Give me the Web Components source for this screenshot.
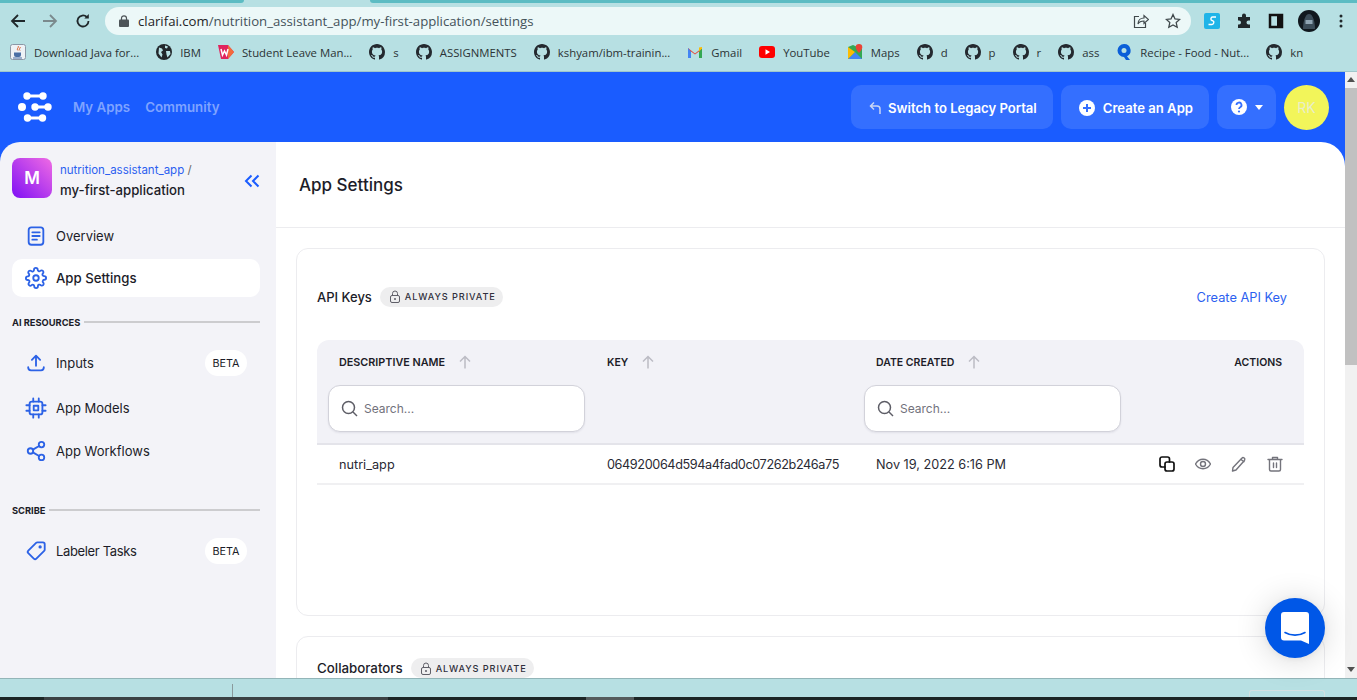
<!DOCTYPE html>
<html lang="en">
<head>
<meta charset="utf-8">
<title>App Settings</title>
<style>
  html, body { margin: 0; height: 100%; overflow: hidden; background: #b7e0e3; }
  body { display: flex; flex-direction: column; height: 700px; font-family: Inter, "Liberation Sans", sans-serif; }
</style>
</head>
<body>
<browser-chrome></browser-chrome>
<app-shell>
  <app-header slot="header"></app-header>
  <app-sidebar slot="sidebar"></app-sidebar>
  <settings-page slot="main"></settings-page>
</app-shell>
<task-strip></task-strip>
<chat-launcher></chat-launcher>

<script>
const GITHUB = '<path fill="#24292f" d="M8 0C3.58 0 0 3.58 0 8c0 3.54 2.29 6.53 5.47 7.59.4.07.55-.17.55-.38 0-.19-.01-.82-.01-1.49-2.01.37-2.53-.49-2.69-.94-.09-.23-.48-.94-.82-1.13-.28-.15-.68-.52-.01-.53.63-.01 1.08.58 1.23.82.72 1.21 1.87.87 2.33.66.07-.52.28-.87.51-1.07-1.78-.2-3.64-.89-3.64-3.95 0-.87.31-1.59.82-2.15-.08-.2-.36-1.02.08-2.12 0 0 .67-.21 2.2.82.64-.18 1.32-.27 2-.27.68 0 1.36.09 2 .27 1.53-1.04 2.2-.82 2.2-.82.44 1.1.16 1.92.08 2.12.51.56.82 1.27.82 2.15 0 3.07-1.87 3.75-3.65 3.95.29.25.54.73.54 1.48 0 1.07-.01 1.93-.01 2.2 0 .21.15.46.55.38A8.013 8.013 0 0016 8c0-4.42-3.58-8-8-8z"/>';

const BOOKMARK_ICONS = {
    java: '<rect x=".5" y=".5" width="15" height="15" rx="2" fill="#eef2f6" stroke="#8a97a6"/><path d="M8 2c1.5 1.5-2 2.500 0 4.500M10 3c1 1-2 2 0 3.500" fill="none" stroke="#d9541e"/><path d="M4 8.500h7v2.500a2 2 0 0 1-2 2H6a2 2 0 0 1-2-2z" fill="#4a6fa5"/><path d="M3 14h9" stroke="#4a6fa5"/>',
    globe: '<circle cx="8" cy="8" r="8" fill="#22272b"/><path d="M3 3.500l3 1 1 2-2 1.500 1.500 2.500-1 3-3-4zM9 1.500l3 1-1 2-2-.5zM10 7l4 0 .5 3-3 3.500-1-3z" fill="#b7e0e3"/>',
    wm: '<path d="M0 1l10 0 6 7-6 7H3z" fill="#e0245e"/><path d="M10 1l6 7-6 7z" fill="#f36b3b"/><path d="M3 5l1.500 6 2-4 2 4L10 5" fill="none" stroke="#fff" stroke-width="1.500"/>',
    github: GITHUB,
    gmail: '<path d="M1 14V4l7 5.500L15 4v10h-3V7.500L8 10.500 4 7.500V14z" fill="#ea4335"/><path d="M1 4v10h3V7.500z" fill="#4285f4"/><path d="M15 4v10h-3V7.500z" fill="#34a853"/><path d="M12 3.500L15 3v1.500l-3 3z" fill="#fbbc04"/>',
    youtube: '<rect y="2" width="16" height="12" rx="3" fill="#f00"/><path d="M6.500 5.200v5.600L11 8z" fill="#fff"/>',
    maps: '<path d="M1 3l5-2 9 4v10l-14 0z" fill="#34a853"/><path d="M1 15l7-7 7 7z" fill="#4285f4"/><path d="M1 3l7 5-7 7z" fill="#fbbc04"/><path d="M12 0a3.300 3.300 0 0 1 3.300 3.300C15.300 5.500 12 9 12 9S8.700 5.500 8.700 3.300A3.300 3.300 0 0 1 12 0z" fill="#ea4335"/>',
    recipe: '<path d="M8 0a6.500 6.500 0 0 1 3 12.300L14 16h-4l-2-3A6.500 6.500 0 0 1 8 0z" fill="#0b5fd8"/><circle cx="8" cy="6.500" r="2.500" fill="#b7e0e3"/>'
};

const NAV_ICONS = {
    overview: '<rect x="4" y="2.500" width="16" height="19" rx="3"/><path d="M8 8h8M8 12h8M8 16h5"/>',
    settings: '<circle cx="12" cy="12" r="3"/><path d="M19.400 15a1.650 1.650 0 0 0 .33 1.820l.06.06a2 2 0 1 1-2.830 2.830l-.06-.06a1.650 1.650 0 0 0-2.800 1.170V21a2 2 0 1 1-4 0v-.09a1.650 1.650 0 0 0-2.820-1.110l-.06.06a2 2 0 1 1-2.830-2.830l.06-.06a1.650 1.650 0 0 0-1.170-2.800H3a2 2 0 1 1 0-4h.09A1.650 1.650 0 0 0 4.200 7.350l-.06-.06a2 2 0 1 1 2.830-2.830l.06.06a1.650 1.650 0 0 0 2.800-1.170V3a2 2 0 1 1 4 0v.09a1.650 1.650 0 0 0 2.800 1.170l.06-.06a2 2 0 1 1 2.830 2.830l-.06.06a1.650 1.650 0 0 0 1.170 2.800H21a2 2 0 1 1 0 4h-.09a1.650 1.650 0 0 0-1.510 1.110z"/>',
    inputs: '<path d="M12 15V4M7.500 8.500L12 4l4.500 4.500M3.500 16.500v.5a3 3 0 0 0 3 3h11a3 3 0 0 0 3-3v-.5"/>',
    models: '<rect x="5" y="5" width="14" height="14" rx="2.500"/><rect x="9.500" y="9.500" width="5" height="5"/><path d="M9 1.500V5M15 1.500V5M9 19v3.500M15 19v3.500M1.500 9H5M1.500 15H5M19 9h3.500M19 15h3.500"/>',
    workflows: '<circle cx="18" cy="5" r="3"/><circle cx="6" cy="12" r="3"/><circle cx="18" cy="19" r="3"/><path d="M8.600 13.500l6.800 4M15.400 6.500l-6.800 4"/>',
    tag: '<path d="M13.500 2.500h6a2 2 0 0 1 2 2v6a2 2 0 0 1-.6 1.400l-8.500 8.500a2 2 0 0 1-2.800 0l-6-6a2 2 0 0 1 0-2.800l8.500-8.500a2 2 0 0 1 1.400-.6z"/><circle cx="16.500" cy="7.500" r=".8"/>'
};

class BrowserChrome extends HTMLElement {
    constructor() {
        super();
        this.attachShadow({ mode: 'open' });
    }

    connectedCallback() {
        const marks = [
            ['java', 'Download Java for...'], ['globe', 'IBM'], ['wm', 'Student Leave Man...'],
            ['github', 's'], ['github', 'ASSIGNMENTS'], ['github', 'kshyam/ibm-trainin...'],
            ['gmail', 'Gmail'], ['youtube', 'YouTube'], ['maps', 'Maps'],
            ['github', 'd'], ['github', 'p'], ['github', 'r'], ['github', 'ass'],
            ['recipe', 'Recipe - Food - Nut...'], ['github', 'kn']
        ];
        const items = marks.map(([icon, label]) => `
            <span class="mark"><svg width="16" height="16" viewBox="0 0 16 16">${BOOKMARK_ICONS[icon]}</svg>${label}</span>`).join('');

        this.shadowRoot.innerHTML = `
            <style>
                :host { display: block; height: 72px; background: #b7e0e3; color: #2b3335; font-family: "Open Sans", "Noto Sans", sans-serif; flex: none; box-sizing: border-box; border-bottom: 1px solid #9fc7cb; }
                .tabs { display: flex; justify-content: space-between; height: 3px; }
                .tabs i { background: #5cbcc3; }
                .tabs i:first-child { width: 244px; border-bottom-right-radius: 4px; }
                .tabs i:last-child { width: 987px; border-bottom-left-radius: 4px; }
                .tools { display: flex; align-items: center; height: 36px; padding-left: 10px; }
                .nav { display: flex; gap: 16px; align-items: center; margin-right: 14px; }
                .url { flex: none; width: 1086px; height: 28px; border-radius: 14px; background: #ecf8f8; display: flex; align-items: center; padding: 0 10px 0 14px; box-sizing: border-box; font-size: 13.200px; color: #44525a; }
                .url b { font-weight: 400; color: #1e2427; }
                .url svg:first-child { margin-right: 9px; }
                .url .grow { flex: 1; }
                .url .star { margin-left: 16px; }
                .ext { display: flex; align-items: center; gap: 16px; margin-left: 13px; }
                .ext .me { margin-left: -2px; }
                .ext .dots { margin-left: 3px; }
                .marks { display: flex; align-items: center; gap: 17px; height: 32px; padding-left: 10px; font-size: 11.350px; white-space: nowrap; margin-top: -3px; }
                .mark { display: flex; align-items: center; gap: 8px; }
            </style>
            <div class="tabs"><i></i><i></i></div>
            <div class="tools">
                <div class="nav">
                    <svg width="16" height="16" viewBox="0 0 16 16" fill="none" stroke="#20282b" stroke-width="1.800"><path d="M15 8H2M8 2L2 8l6 6"/></svg>
                    <svg width="16" height="16" viewBox="0 0 16 16" fill="none" stroke="#7b8a8d" stroke-width="1.800"><path d="M1 8h13M8 2l6 6-6 6"/></svg>
                    <svg width="16" height="16" viewBox="0 0 16 16" fill="none" stroke="#20282b" stroke-width="1.800" style="margin-left:1px"><path d="M13.500 8A5.500 5.500 0 1 1 11.800 4"/><path d="M13.800 1v4.500H9.300" stroke="none" fill="#20282b"/></svg>
                </div>
                <div class="url">
                    <svg width="10" height="12" viewBox="0 0 10 12"><path d="M2.500 5V3.300a2.500 2.500 0 0 1 5 0V5" fill="none" stroke="#4d5458" stroke-width="1.200"/><rect y="4.600" width="10" height="7.400" rx="1" fill="#4d5458"/></svg>
                    <span><b>clarifai.com</b>/nutrition_assistant_app/my-first-application/settings</span>
                    <span class="grow"></span>
                    <svg width="16" height="16" viewBox="0 0 16 16" fill="none" stroke="#40494c" stroke-width="1.200"><path d="M6 3.500H1.500v11h11V10"/><path d="M5 11c0-4 3-6 6-6V2.500L15.500 6.500 11 10.500V8c-3 0-5 1-6 3z"/></svg>
                    <svg class="star" width="16" height="16" viewBox="0 0 16 16" fill="none" stroke="#40494c" stroke-width="1.300"><path d="M8 1.500l2 4.400 4.700.5-3.500 3.200 1 4.700L8 11.900l-4.200 2.400 1-4.700L1.300 6.400 6 5.900z"/></svg>
                </div>
                <div class="ext">
                    <svg width="16" height="16" viewBox="0 0 16 16"><rect width="16" height="16" rx="2" fill="#1fb4e8"/><path d="M12 4H8.500C6.800 4 6.200 7 8 7.500l1 .4c1.500.6.800 3.600-1 3.600H4.500" fill="none" stroke="#fff" stroke-width="1.400"/></svg>
                    <svg width="16" height="16" viewBox="0 0 16 16"><path d="M6 2.500a2 2 0 0 1 4 0V4h4v3.500h-1.500a2 2 0 0 0 0 4H14V15H2v-3.500h1a2 2 0 0 0 0-4H2V4h4z" fill="#20282b"/></svg>
                    <svg width="16" height="16" viewBox="0 0 16 16"><path d="M2 2h12v12H2z" fill="none" stroke="#111" stroke-width="2.500"/><rect x="9" y="2" width="5" height="12" fill="#111"/></svg>
                    <svg class="me" width="22" height="22" viewBox="0 0 22 22"><circle cx="11" cy="11" r="11" fill="#10181e"/><path d="M5 19c0-7 2-15 6-15s6 8 6 15z" fill="#3b4c58"/><rect x="7.500" y="10" width="7" height="4" fill="#8fa5b3"/></svg>
                    <svg class="dots" width="4" height="14" viewBox="0 0 4 14"><circle cx="2" cy="2" r="1.500" fill="#20282b"/><circle cx="2" cy="7" r="1.500" fill="#20282b"/><circle cx="2" cy="12" r="1.500" fill="#20282b"/></svg>
                </div>
            </div>
            <div class="marks">${items}</div>
        `;
    }
}

class AppShell extends HTMLElement {
    constructor() {
        super();
        this.attachShadow({ mode: 'open' });
        this.shadowRoot.innerHTML = `
            <style>
                :host { display: grid; grid-template-columns: 1fr 12px; flex: 1; min-height: 0; overflow: hidden; background: #f1f1f1; }
                .page { display: grid; grid-template-rows: 70px 1fr; grid-template-columns: 276px 1fr; background: #1a5cff; min-height: 0; overflow: hidden; }
                .head { grid-column: 1 / 3; }
                .bar { display: flex; flex-direction: column; align-items: center; background: #f1f1f1; }
                .bar span { display: block; width: 0; height: 0; border: 4px solid transparent; }
                .up { border-bottom: 5px solid #505050 !important; border-top-width: 0 !important; margin-top: 5px; }
                .down { border-top: 5px solid #505050 !important; border-bottom-width: 0 !important; margin-bottom: 6px; }
                .thumb { width: 100%; height: 277px; margin: 6px 0 auto; background: #c1c1c1; }
            </style>
            <div class="page">
                <div class="head"><slot name="header"></slot></div>
                <slot name="sidebar"></slot>
                <slot name="main"></slot>
            </div>
            <div class="bar"><span class="up"></span><div class="thumb"></div><span class="down"></span></div>
        `;
    }
}

class AppHeader extends HTMLElement {
    constructor() {
        super();
        this.attachShadow({ mode: 'open' });
        this.shadowRoot.innerHTML = `
            <style>
                :host { display: flex; align-items: center; height: 70px; padding: 0 16px 0 18px; box-sizing: border-box; color: #fff; }
                .logo { margin-right: 21px; }
                a { color: #7ea3ff; font-size: 13.300px; font-weight: 600; margin-right: 15px; }
                .grow { flex: 1; }
                .btn { display: flex; align-items: center; gap: 7px; height: 44px; padding: 0 16px; margin-left: 8px; border-radius: 10px; background: #346fff; font-size: 13.100px; font-weight: 600; box-sizing: border-box; white-space: nowrap; padding-top: 1px; }
                .switch { padding-left: 18px; padding-right: 16px; }
                .create { gap: 8px; padding-left: 18px; }
                .help { width: 59px; padding: 0 0 0 14px; gap: 8px; }
                .caret { width: 0; height: 0; border: 4px solid transparent; border-top: 5px solid #fff; border-bottom: 0; }
                .user { display: flex; align-items: center; justify-content: center; width: 45px; height: 45px; margin-left: 8px; border-radius: 50%; background: #f2f55a; font-size: 14px; color: #e9eec8; }
            </style>
            <svg class="logo" width="34" height="30" viewBox="0 0 34 30" fill="#fff" stroke="#fff">
                <path d="M9 4h16" stroke-width="3"/><circle cx="9" cy="4" r="3.700" stroke="none"/><circle cx="25" cy="4" r="3.700" stroke="none"/>
                <circle cx="4" cy="15" r="4" stroke="none"/>
                <path d="M17 15h13" stroke-width="3"/><circle cx="17" cy="15" r="3.700" stroke="none"/><circle cx="30" cy="15" r="3.700" stroke="none"/>
                <path d="M9.500 26h15" stroke-width="3"/><circle cx="9.500" cy="26" r="3.700" stroke="none"/><circle cx="24.500" cy="26" r="3.700" stroke="none"/>
            </svg>
            <a>My Apps</a>
            <a>Community</a>
            <span class="grow"></span>
            <div class="btn switch">
                <svg width="12" height="14" viewBox="0 0 12 14" fill="none" stroke="#c9d6f5" stroke-width="1.500"><path d="M5 1.500L1.500 5 5 8.500M1.500 5H8a3 3 0 0 1 3 3v5"/></svg>
                Switch to Legacy Portal
            </div>
            <div class="btn create">
                <svg width="16" height="16" viewBox="0 0 16 16"><circle cx="8" cy="8" r="8" fill="#fff"/><path d="M8 4v8M4 8h8" stroke="#346fff" stroke-width="2"/></svg>
                Create an App
            </div>
            <div class="btn help">
                <svg width="16" height="16" viewBox="0 0 16 16"><circle cx="8" cy="8" r="8" fill="#fff"/><path d="M5.500 6a2.500 2.500 0 1 1 3.700 2.200c-.8.5-1.200.9-1.200 1.800" fill="none" stroke="#346fff" stroke-width="1.800"/><circle cx="8" cy="12.500" r="1.100" fill="#346fff"/></svg>
                <span class="caret"></span>
            </div>
            <div class="user">RK</div>
        `;
    }
}

class NavItem extends HTMLElement {
    constructor() {
        super();
        this.attachShadow({ mode: 'open' });
    }

    connectedCallback() {
        const icon = NAV_ICONS[this.getAttribute('icon')] || '';
        const beta = this.hasAttribute('beta') ? '<span class="beta">BETA</span>' : '';
        this.shadowRoot.innerHTML = `
            <style>
                :host { display: flex; align-items: center; height: 38px; padding: 0 13px; border-radius: 10px; font-size: 13px; color: #1c1c28; }
                :host([active]) { background: #fff; font-weight: 500; font-size: 13.200px; }
                svg { width: 22px; height: 22px; margin-right: 9px; flex: none; fill: none; stroke: #2c62e6; stroke-width: 2; stroke-linecap: round; stroke-linejoin: round; }
                .label { flex: 1; }
                .beta { display: flex; align-items: center; height: 26px; padding: 0 7.500px; border-radius: 13px; background: #fff; font-size: 10.800px; letter-spacing: 0; }
            </style>
            <svg viewBox="0 0 24 24">${icon}</svg>
            <span class="label"><slot></slot></span>
            ${beta}
        `;
    }
}

class NavSection extends HTMLElement {
    constructor() {
        super();
        this.attachShadow({ mode: 'open' });
        this.shadowRoot.innerHTML = `
            <style>
                :host { display: flex; align-items: center; gap: 4px; height: 14px; font-size: 9.300px; font-weight: 700; color: #1c1c28; white-space: nowrap; }
                i { flex: 1; height: 2px; background: #cccccf; }
            </style>
            <slot></slot><i></i>
        `;
    }
}

class AppSidebar extends HTMLElement {
    constructor() {
        super();
        this.attachShadow({ mode: 'open' });
        this.shadowRoot.innerHTML = `
            <style>
                :host { display: flex; flex-direction: column; padding: 16px 16px 0 12px; background: #f3f3f8; border-top-left-radius: 20px; min-height: 0; }
                .crumb { display: flex; align-items: center; height: 40px; margin-bottom: 19px; }
                .avatar { display: flex; align-items: center; justify-content: center; width: 40px; height: 40px; border-radius: 8px; flex: none; margin-right: 8px; background: linear-gradient(45deg, #7f10f5, #f06be4); color: #fff; font-size: 17px; font-weight: 600; }
                .path { flex: 1; font-size: 11.500px; line-height: 20px; color: #666; white-space: nowrap; padding-top: 4px; }
                .path a { color: #2c5ff0; }
                .path div { font-size: 13.200px; font-weight: 500; color: #1c1c28; }
                .chev { align-self: flex-end; margin-bottom: 10px; }
                nav-item + nav-item { margin-top: 4px; }
                .ai { margin: 18px 0 15px; }
                .models { margin-top: 7px !important; }
                .wf { margin-top: 5px !important; }
                .scribe { margin: 33px 0 15px; }
                .tasks { letter-spacing: -.35px; }
            </style>
            <div class="crumb">
                <div class="avatar">M</div>
                <div class="path"><a>nutrition_assistant_app</a> /<div>my-first-application</div></div>
                <svg class="chev" width="16" height="14" viewBox="0 0 16 14" fill="none" stroke="#1a5cff" stroke-width="2"><path d="M7.500 1.500L2 7l5.500 5.500M14.500 1.500L9 7l5.500 5.500"/></svg>
            </div>
            <nav-item icon="overview">Overview</nav-item>
            <nav-item icon="settings" active>App Settings</nav-item>
            <nav-section class="ai">AI RESOURCES</nav-section>
            <nav-item icon="inputs" beta>Inputs</nav-item>
            <nav-item icon="models" class="models">App Models</nav-item>
            <nav-item icon="workflows" class="wf">App Workflows</nav-item>
            <nav-section class="scribe">SCRIBE</nav-section>
            <nav-item icon="tag" class="tasks" beta>Labeler Tasks</nav-item>
        `;
    }
}

class PrivateBadge extends HTMLElement {
    constructor() {
        super();
        this.attachShadow({ mode: 'open' });
        this.shadowRoot.innerHTML = `
            <style>
                :host { display: inline-flex; align-items: center; gap: 4px; height: 20px; padding: 0 7px 0 9px; border-radius: 10px; background: #eeeeef; font-size: 9.200px; font-weight: 500; letter-spacing: .9px; color: #30303c; white-space: nowrap; }
            </style>
            <svg width="12" height="13" viewBox="0 0 12 13" fill="none" stroke="#5f5f68" stroke-width="1"><path d="M3.500 5.500V3.500a2.500 2.500 0 0 1 5 0v2"/><rect x="1.500" y="5.500" width="9" height="7" rx="1.500"/><circle cx="6" cy="9" r=".6" fill="#5f5f68"/></svg>
            <slot></slot>
        `;
    }
}

class SearchBox extends HTMLElement {
    constructor() {
        super();
        this.attachShadow({ mode: 'open' });
        this.shadowRoot.innerHTML = `
            <style>
                :host { display: flex; align-items: center; gap: 6px; width: 257px; height: 47px; padding-left: 12px; box-sizing: border-box; background: #fff; border: 1px solid #d2d2da; border-radius: 12px; box-shadow: 0 1px 2px rgba(30,30,60,.08); font-size: 12px; color: #72727c; }
            </style>
            <svg width="17" height="17" viewBox="0 0 17 17" fill="none" stroke="#5d5d66" stroke-width="1.500"><circle cx="7.500" cy="7.500" r="6"/><path d="M12 12l4 4"/></svg>
            Search...
        `;
    }
}

class SortHead extends HTMLElement {
    constructor() {
        super();
        this.attachShadow({ mode: 'open' });
        this.shadowRoot.innerHTML = `
            <style>
                :host { display: flex; align-items: center; height: 20px; font-size: 10.500px; font-weight: 600; color: #1c1c28; white-space: nowrap; gap: 14px; }
            </style>
            <slot></slot>
            <svg width="12" height="14" viewBox="0 0 12 14" fill="none" stroke="#bcbcc4" stroke-width="1.500"><path d="M6 13.500V1.500M1 6.500l5-5 5 5"/></svg>
        `;
    }
}

class KeysTable extends HTMLElement {
    constructor() {
        super();
        this.attachShadow({ mode: 'open' });
        this.shadowRoot.innerHTML = `
            <style>
                :host { display: block; font-size: 12.700px; color: #2a2a34; }
                .head, .row { display: grid; grid-template-columns: 268px 269px 1fr auto; padding: 0 22px; }
                .head { grid-template-rows: 20px 47px; row-gap: 13px; height: 105px; padding-top: 12px; box-sizing: border-box; background: #f2f2f7; border-radius: 12px 12px 0 0; border-bottom: 2px solid #e4e4ea; }
                .head sort-head:first-child { font-size: 10.800px; }
                .head search-box { margin-left: -11px; }
                .head search-box:last-of-type { margin-left: -12px; }
                .actions { justify-self: end; align-self: center; font-size: 10.500px; font-weight: 600; color: #1c1c28; }
                .row { align-items: center; height: 40px; border-bottom: 2px solid #f0f0f2; box-sizing: border-box; }
                .key { letter-spacing: -.4px; }
                .tools { display: flex; gap: 20px; margin-right: -1px; }
                .tools svg { width: 16px; height: 16px; fill: none; stroke: #74747c; stroke-width: 1.400; stroke-linejoin: round; stroke-linecap: round; }
                .tools svg.copy { stroke: #111; stroke-width: 1.700; }
            </style>
            <div class="head">
                <sort-head>DESCRIPTIVE NAME</sort-head>
                <sort-head>KEY</sort-head>
                <sort-head>DATE CREATED</sort-head>
                <span class="actions">ACTIONS</span>
                <search-box></search-box>
                <span></span>
                <search-box></search-box>
                <span></span>
            </div>
            <div class="row">
                <span>nutri_app</span>
                <span class="key">064920064d594a4fad0c07262b246a75</span>
                <span>Nov 19, 2022 6:16 PM</span>
                <div class="tools">
                    <svg class="copy" viewBox="0 0 16 16"><rect x="6" y="6" width="9" height="9" rx="2"/><path d="M6 11H3a2 2 0 0 1-2-2V3a2 2 0 0 1 2-2h5.500a2 2 0 0 1 2 2v3"/></svg>
                    <svg viewBox="0 0 16 16"><path d="M.5 8C2.300 4.900 5 3.300 8 3.300S13.700 4.900 15.500 8C13.700 11.100 11 12.700 8 12.700S2.300 11.100.5 8z"/><circle cx="8" cy="8" r="2.500"/></svg>
                    <svg viewBox="0 0 16 16"><path d="M10.800 2.200a1.700 1.700 0 0 1 2.900 1.700l-.5.8L5 14l-3.500 1 .5-3.600z"/><path d="M10 3.500l3 2.200"/></svg>
                    <svg viewBox="0 0 16 16"><path d="M1 3.500h14M5.500 3.500V1.500h5v2M2.500 3.500v10a1.500 1.500 0 0 0 1.500 1.500h8a1.500 1.500 0 0 0 1.500-1.500v-10M6.500 7v4.500M9.500 7v4.500"/></svg>
                </div>
            </div>
        `;
    }
}

class SettingsCard extends HTMLElement {
    constructor() {
        super();
        this.attachShadow({ mode: 'open' });
        this.shadowRoot.innerHTML = `
            <style>
                :host { display: block; flex: none; padding: 0 20px; border: 1px solid #ececef; border-radius: 12px; box-sizing: border-box; }
                .top { display: flex; align-items: center; gap: 8px; height: var(--top-height, 91px); padding-top: var(--top-pad, 0); box-sizing: border-box; font-size: var(--title-size, 13px); font-weight: 500; color: #1c1c28; }
                .grow { flex: 1; }
                ::slotted(a) { color: #2c5ff0; font-size: 12.800px; font-weight: 400; margin: 2px 17px 0 0; }
            </style>
            <div class="top">
                <slot name="title"></slot><slot name="badge"></slot>
                <span class="grow"></span>
                <slot name="link"></slot>
            </div>
            <slot></slot>
        `;
    }
}

class SettingsPage extends HTMLElement {
    constructor() {
        super();
        this.attachShadow({ mode: 'open' });
        this.shadowRoot.innerHTML = `
            <style>
                :host { display: block; background: #fff; border-top-right-radius: 24px; min-height: 0; overflow: hidden; }
                h1 { margin: 0; height: 85px; line-height: 86px; padding-left: 23px; border-bottom: 1px solid #ececef; font-size: 17px; font-weight: 500; color: #1c1c28; }
                .body { display: flex; flex-direction: column; gap: 20px; padding: 20px; }
                .keys { height: 368px; --top-pad: 4px; }
                .collab { height: 200px; --top-height: 62px; --title-size: 13.300px; }
            </style>
            <h1>App Settings</h1>
            <div class="body">
                <settings-card class="keys">
                    <span slot="title">API Keys</span>
                    <private-badge slot="badge">ALWAYS PRIVATE</private-badge>
                    <a slot="link">Create API Key</a>
                    <keys-table></keys-table>
                </settings-card>
                <settings-card class="collab">
                    <span slot="title">Collaborators</span>
                    <private-badge slot="badge">ALWAYS PRIVATE</private-badge>
                </settings-card>
            </div>
        `;
    }
}

class TaskStrip extends HTMLElement {
    constructor() {
        super();
        this.attachShadow({ mode: 'open' });
        this.shadowRoot.innerHTML = `
            <style>
                :host { display: block; flex: none; height: 22px; background: #b7e0e3; border-top: 1px solid #93b5b8; box-sizing: border-box; }
                .gap { display: flex; align-items: flex-end; height: 18px; overflow: hidden; }
                .gap i { width: 1px; height: 13px; margin-left: 232px; background: #8a9a9c; }
                .gap u { width: 76px; height: 7px; margin-left: auto; margin-right: 32px; border: 1px solid #d3dfe0; border-bottom: 0; border-radius: 3px 3px 0 0; box-sizing: border-box; }
                .dark { display: flex; height: 3px; background: #1c2626; }
                .dark b { width: 344px; margin-left: 44px; background: #3b4244; }
                .dark em { width: 48px; margin-left: 198px; background: #555c5d; }
            </style>
            <div class="gap"><i></i><u></u></div>
            <div class="dark"><b></b><em></em></div>
        `;
    }
}

class ChatLauncher extends HTMLElement {
    constructor() {
        super();
        this.attachShadow({ mode: 'open' });
        this.shadowRoot.innerHTML = `
            <style>
                :host { position: absolute; left: 1265px; top: 598px; display: flex; align-items: center; justify-content: center; width: 60px; height: 60px; border-radius: 50%; background: #0057e7; box-shadow: 0 1px 6px rgba(0,0,0,.06), 0 2px 32px rgba(0,0,0,.16); }
            </style>
            <svg width="28" height="32" viewBox="0 0 28 32"><path d="M3 0h22a3 3 0 0 1 3 3v29l-8-3.500H3a3 3 0 0 1-3-3V3a3 3 0 0 1 3-3z" fill="#fff"/><path d="M4 20.500c6 3.500 14 3.500 20 0" fill="none" stroke="#0057e7" stroke-width="1.600" stroke-linecap="round"/></svg>
        `;
    }
}

customElements.define('browser-chrome', BrowserChrome);
customElements.define('app-shell', AppShell);
customElements.define('app-header', AppHeader);
customElements.define('nav-item', NavItem);
customElements.define('nav-section', NavSection);
customElements.define('app-sidebar', AppSidebar);
customElements.define('private-badge', PrivateBadge);
customElements.define('search-box', SearchBox);
customElements.define('sort-head', SortHead);
customElements.define('keys-table', KeysTable);
customElements.define('settings-card', SettingsCard);
customElements.define('settings-page', SettingsPage);
customElements.define('task-strip', TaskStrip);
customElements.define('chat-launcher', ChatLauncher);
</script>
</body>
</html>
